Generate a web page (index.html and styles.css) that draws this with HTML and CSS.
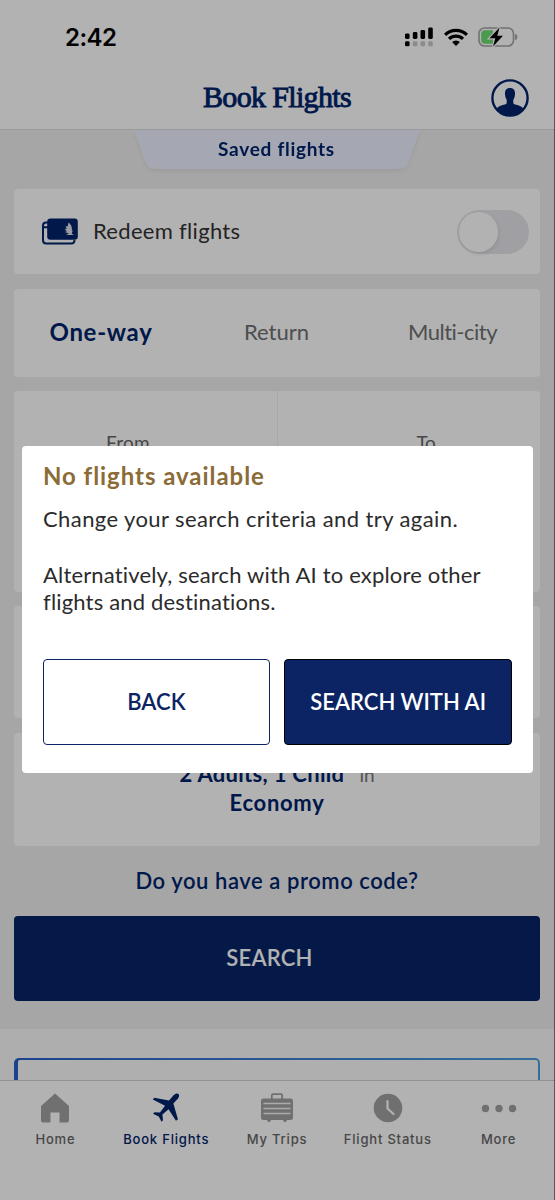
FILE: index.html
```html
<!DOCTYPE html>
<html lang="en">
<head>
<meta charset="utf-8">
<title>Book Flights</title>
<link rel="stylesheet" href="styles.css">
</head>
<body>
<div class="app">
  <header class="header">
    <div class="status">
      <span class="time">2:42</span>
      <div class="status-icons">
        <svg class="signal" width="28" height="20" viewBox="0 0 28 20">
          <rect x="0" y="6.500" width="4.600" height="5.500" rx="1.400"/><rect x="7.800" y="5" width="4.600" height="7" rx="1.400"/><rect x="15.500" y="3" width="4.600" height="9" rx="1.400"/><rect x="23.200" y="0.500" width="4.600" height="11.500" rx="1.400"/>
          <rect x="0" y="14.300" width="4.600" height="5" rx="1.400"/>
          <g fill="#c9c9c9"><rect x="7.800" y="14.300" width="4.600" height="5" rx="1.400"/><rect x="15.500" y="14.300" width="4.600" height="5" rx="1.400"/><rect x="23.200" y="14.300" width="4.600" height="5" rx="1.400"/></g>
        </svg>
        <svg class="wifi" width="24" height="18" viewBox="0 0 24 18">
          <g fill="none" stroke="#000" stroke-width="3.200"><path d="M1.100 6.800A15.500 15.500 0 0 1 22.900 6.800"/><path d="M5 10.900A10 10 0 0 1 19 10.900"/></g>
          <path d="M12 18 8.100 14.100A5.600 5.600 0 0 1 15.900 14.100Z"/>
        </svg>
        <svg class="battery" width="40" height="20" viewBox="0 0 40 20">
          <rect x="1" y="1" width="34.500" height="18" rx="5.500" fill="none" stroke="#a3a3a3" stroke-width="1.600"/>
          <path d="M7 3.200H15V16.800H7Q3.200 16.800 3.200 13V7Q3.200 3.200 7 3.200Z" fill="#6ddb73"/>
          <path d="M37 6.800Q39.400 7.800 39.400 10T37 13.200Z" fill="#a3a3a3"/>
          <path d="M21.500 0.500 11.500 11.200H17.300L15 19.500 25 8.800H19.300Z" stroke="#fff" stroke-width="2.400" paint-order="stroke"/>
        </svg>
      </div>
    </div>
    <div class="titlebar">
      <h1>Book Flights</h1>
      <svg class="profile" width="38" height="38" viewBox="0 0 38 38">
        <circle cx="19" cy="19" r="17.600" fill="none" stroke="#00246a" stroke-width="2.400"/>
        <path d="M19 9C22.800 9 24.300 11.500 24 15.200C23.800 18 22.900 19.700 22.300 20.800V24.300C23.500 26.500 30 25.500 32.500 30Q27 36.500 19 36.500T5.500 30C8 25.500 14.500 26.500 15.700 24.300V20.800C15.100 19.700 14.200 18 14 15.200C13.700 11.500 15.200 9 19 9Z" fill="#00246a"/>
      </svg>
    </div>
  </header>

  <main class="page">
    <div class="saved">
      <svg width="286" height="44" viewBox="0 0 286 44"><path d="M0 0H286L274.500 32Q272 39 265 39H21Q14 39 11.500 32Z" fill="#ecf1ff"/></svg>
      <span>Saved flights</span>
    </div>
    <section class="card redeem">
      <svg width="36" height="27" viewBox="0 0 36 27">
        <path d="M7 4.500H4.200Q1 4.500 1 7.500V22Q1 25.500 4.200 25.500H29Q32.500 25.500 32.500 22M1 9.300H6" fill="none" stroke="#00246a" stroke-width="2"/>
        <rect x="5.200" y="0.500" width="30.600" height="21.200" rx="3.200" fill="#00246a"/>
        <path d="M26.500 4.500C29 6.500 30.300 9 29.800 11.500Q31.300 12.800 29.600 15.500L32 17H24L27 15.500 22.800 13.900 25 13.300 22.600 11.300 24.800 10.800 23.400 8.500 25.700 8.300Z" fill="#dce1ea"/>
      </svg>
      <span class="redeem-label">Redeem flights</span>
      <span class="toggle"><i></i></span>
    </section>
    <section class="card trip">
      <b>One-way</b><span class="return">Return</span><span class="multi">Multi-city</span>
    </section>
    <section class="card route"><span class="from">From</span><span class="to">To</span></section>
    <section class="card dates"></section>
    <section class="card pax">
      <div><b class="adults">2 Adults, 1 Child</b><span>in</span></div>
      <b class="cabin">Economy</b>
    </section>
    <div class="promo">Do you have a promo code?</div>
    <div class="search">SEARCH</div>
  </main>
  <section class="more-content"><div class="offer"><div></div></div></section>

  <nav class="tabs">
    <div class="tab">
      <svg width="32" height="32" viewBox="0 0 32 32"><path d="M16 1.500 30 14V28.500Q30 30.500 28 30.500H20.500V20.500H11.500V30.500H4Q2 30.500 2 28.500V14Z"/></svg>
      <span>Home</span>
    </div>
    <div class="tab active">
      <svg width="32" height="32" viewBox="-1 -0.5 34 34"><path d="M29.300 1.700C30.700 3 29.800 5.300 28.300 7L23.800 11.800 28.700 28.500 26.600 30 18.700 17.700 12.200 23.300 12.800 29.500 11.300 31 8.300 25.400 2.200 22.700 3.800 21.100 9.600 21.200 15 14.100 2 7.500 3.600 5.600 19.200 8.400 24.300 2.800C25.900 1.200 28 0.600 29.300 1.700Z"/></svg>
      <span>Book Flights</span>
    </div>
    <div class="tab">
      <svg width="36" height="32" viewBox="0 0 36 32">
        <path d="M12.800 7V3.500Q12.800 2.200 14 2.200H22Q23.200 2.200 23.200 3.500V7" fill="none" stroke="#a1a1a1" stroke-width="1.800"/>
        <rect x="2" y="6.500" width="32" height="21.500" rx="2.500"/><path d="M8 28H12Q12 30 10 30T8 28ZM24 28H28Q28 30 26 30T24 28Z"/>
        <path d="M4.500 11.500H31.500M4.500 16.500H31.500M4.500 21.500H31.500" stroke="#f5f5f5" stroke-width="1.300"/>
      </svg>
      <span>My Trips</span>
    </div>
    <div class="tab">
      <svg width="32" height="32" viewBox="0 0 32 32"><circle cx="16" cy="16" r="14.300"/><path d="M15.500 9V16.500L21.500 22" fill="none" stroke="#fff" stroke-width="2.200" stroke-linecap="round"/></svg>
      <span>Flight Status</span>
    </div>
    <div class="tab">
      <svg width="36" height="32" viewBox="0 0 36 32"><circle cx="4.500" cy="16.500" r="3.700"/><circle cx="18" cy="16.500" r="3.700"/><circle cx="31.500" cy="16.500" r="3.700"/></svg>
      <span>More</span>
    </div>
  </nav>
</div>

<div class="scrim">
  <div class="dialog">
    <h2>No flights available</h2>
    <p class="line-a">Change your search criteria and try again.</p>
    <p class="line-b">Alternatively, search with AI to explore other<br><span>flights and destinations.</span></p>
    <div class="actions">
      <button class="back">BACK</button>
      <button class="ai">SEARCH WITH AI</button>
    </div>
  </div>
</div>
</body>
</html>
```
FILE: styles.css
```css
* { box-sizing: border-box; }
body { margin: 0; font-family: Lato, sans-serif; color: #333; overflow: hidden; white-space: nowrap; }
svg { display: block; flex: none; }
h1, h2, p { margin: 0; }
.app { width: 555px; height: 1200px; display: flex; flex-direction: column; background: #fff; }

.header { height: 130px; border-bottom: 1px solid #dcdee3; background: #fff; }
.status { height: 68px; padding: 6px 37px 0 65px; display: flex; justify-content: space-between; align-items: center; }
.time { font: 600 24px/28px Inter, sans-serif; letter-spacing: -0.5px; color: #000; padding-top: 1px; }
.status-icons { display: flex; align-items: center; }
.wifi { margin: 0 10px 0 11px; }
.signal { margin-top: -1px; }
.titlebar { height: 60px; display: flex; justify-content: center; align-items: center; position: relative; }
h1 { font: 400 30px/36px "Liberation Serif", serif; -webkit-text-stroke: .9px #00246a; padding: 0 1px 2px 0; letter-spacing: -0.65px; color: #00246a; }
.profile { position: absolute; right: 26px; top: 11px; }

.page { height: 899px; background: #eee; padding: 0 15px 0 14px; }
.saved { height: 59px; width: 286px; margin: 0 auto; position: relative; left: -0.5px; filter: drop-shadow(0 2px 2px rgba(0,0,0,.06)); }
.saved svg { width: 286px; }
.saved span { position: absolute; inset: 0 0 auto; text-align: center; font-weight: 700; font-size: 19px; line-height: 38px; letter-spacing: .73px; color: #00246a; }
.card { background: #fff; border-radius: 4px; margin-bottom: 14px; }
.redeem { height: 85px; margin-bottom: 15px; padding: 0 11px 0 28px; display: flex; align-items: center; }
.redeem-label { font-size: 22px; letter-spacing: .3px; margin-left: 15px; padding-bottom: 3px; flex: 1; }
.toggle { width: 72px; height: 44px; border-radius: 22px; background: #e6e6eb; padding: 2px; }
.toggle i { display: block; width: 39px; height: 40px; border-radius: 50%; background: #fff; box-shadow: 1px 2px 4px rgba(0,0,0,.09); }
.trip { height: 88px; display: grid; grid-template-columns: 174px 177px 1fr; align-items: center; text-align: center; padding-bottom: 4px; font-size: 22px; color: #707070; }
.trip b { font-size: 24px; letter-spacing: .7px; color: #00246a; }
.multi { letter-spacing: -.5px; }
.route { height: 201px; display: grid; grid-template-columns: 264px 1fr; font-size: 19px; line-height: 24px; text-align: center; color: #666; }
.route span { padding-top: 40px; }
.from { border-right: 1px solid #f0f0f0; padding-right: 35px; letter-spacing: .28px; }
.to { padding-left: 34px; letter-spacing: -.34px; }
.dates { height: 112px; margin-bottom: 15px; }
.pax { height: 113px; padding-top: 27px; text-align: center; font-size: 22px; line-height: 28px; }
.pax b { color: #00246a; display: inline-block; }
.pax span { margin-left: 15px; font-size: 19px; color: #777; }
.adults { letter-spacing: .31px; }
.cabin { letter-spacing: .7px; }
.promo { height: 56px; line-height: 41px; text-align: center; font-size: 22px; font-weight: 600; color: #00246a; letter-spacing: .56px; }
.search { height: 85px; border-radius: 4px; background: #072567; color: #fff; font-size: 22px; font-weight: 600; letter-spacing: .2px; line-height: 84px; text-align: center; padding-right: 15px; }

.more-content { height: 51px; background: #f9f9f9; padding: 29px 15px 0 14px; }
.offer { height: 22px; border-radius: 5px 5px 0 0; padding: 2px 2px 0 4px; background: linear-gradient(90deg, #2a5fc9, #4d9ee0); }
.offer div { height: 20px; background: #fbfbfb; border-radius: 2px 3px 0 0; }

.tabs { height: 120px; border-top: 1px solid #d2d2d2; background: #fff; display: grid; grid-template-columns: repeat(5, 1fr); padding: 11px 1px 0 0; }
.tab { display: flex; flex-direction: column; align-items: center; font: 500 13px/18px Inter, sans-serif; letter-spacing: .81px; color: #666; fill: #a1a1a1; }
.tab span { margin-top: 6px; }
.active { color: #00246a; fill: #00246a; }

.scrim { position: fixed; inset: 0; background: rgba(0,0,0,.3); border-right: 1px solid rgba(0,0,0,.5); padding: 446px 21px 0 21.500px; }
.dialog { width: 511.500px; height: 327px; background: #fff; border-radius: 4px; padding: 16px 21px 0; color: #2b2b2b; font-size: 22px; line-height: 27.500px; }
h2 { font-size: 24px; line-height: 27px; color: #8b6c37; letter-spacing: .95px; }
.line-a { margin-top: 16px; letter-spacing: .41px; }
.line-b { margin-top: 28px; letter-spacing: .17px; }
.line-a, .line-b, h2 { padding-left: .5px; }
.actions { display: flex; gap: 14px; margin-top: 43.500px; width: 469.500px; }
button { flex: 1 1 0; padding: 0; height: 86px; border-radius: 4px; font: 600 22px/28px Lato, sans-serif; border: 1.500px solid #0c2463; background: #fff; color: #0c2463; }
.ai { background: #0c2463; color: #fff; border-color: #000; }
```
